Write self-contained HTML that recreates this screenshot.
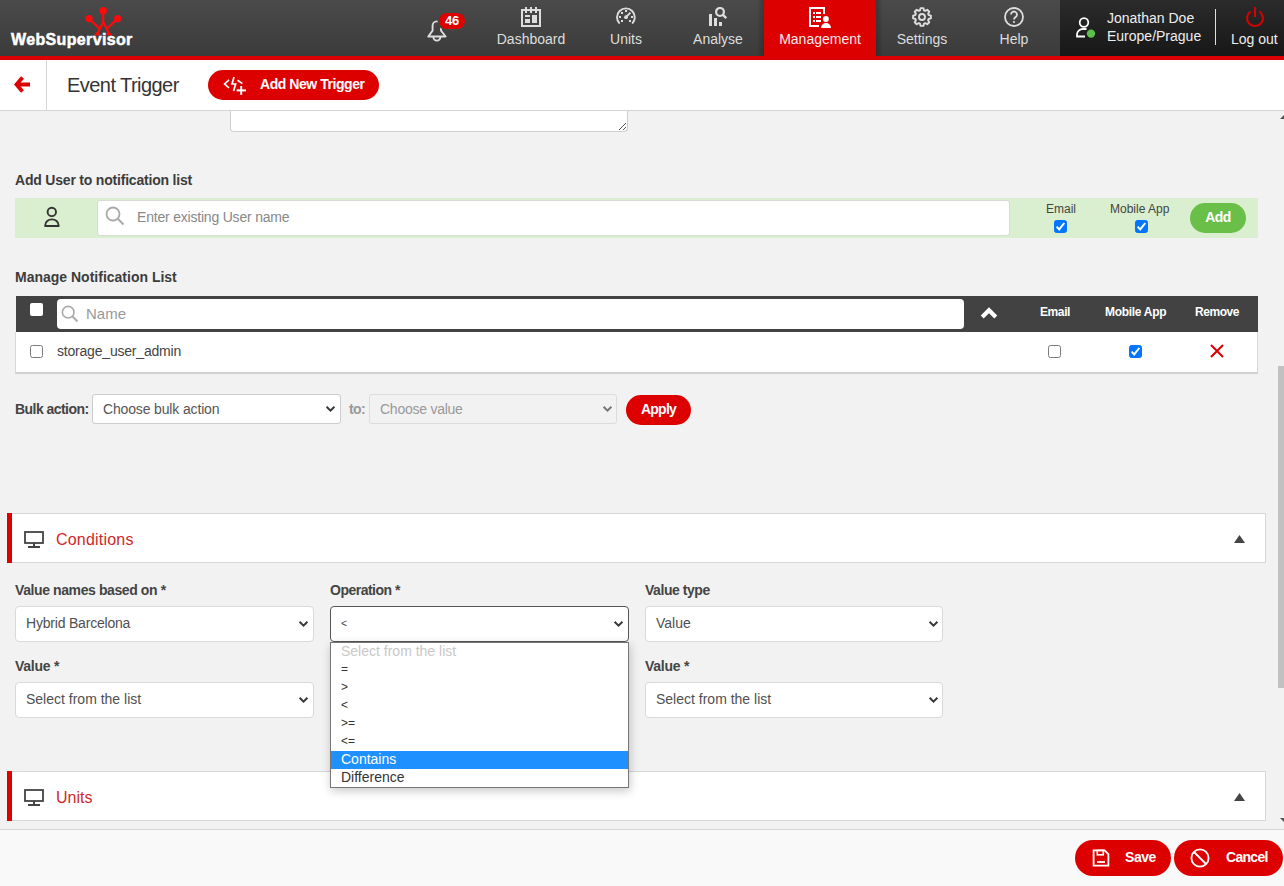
<!DOCTYPE html>
<html><head><meta charset="utf-8">
<style>
*{box-sizing:border-box;margin:0;padding:0}
html,body{width:1284px;height:886px;overflow:hidden}
body{background:#f2f2f2;font-family:"Liberation Sans",sans-serif;color:#444;position:relative}
.abs{position:absolute}
#hdr{left:0;top:0;width:1284px;height:56px;background:linear-gradient(#4a4a4a,#3b3b3b)}
#redline{left:0;top:56px;width:1284px;height:4px;background:#dd0000}
.nav{top:0;height:56px;color:#ddd;font-size:14px;text-align:center}
.nav .lbl{position:absolute;left:0;right:0;top:31px;line-height:16px;white-space:nowrap}
.nav svg{position:absolute;top:7px}
#user{left:1060px;top:0;width:224px;height:56px;background:linear-gradient(#2b2b2b,#171717)}
#sub{left:0;top:60px;width:1284px;height:50px;background:#fff}
.lbl14b{font-size:14px;font-weight:bold;color:#3c3c3c;white-space:nowrap;line-height:16px}
.txt{white-space:nowrap}
.sel{background:#fff;border:1px solid #d9d9d9;border-radius:4px}
.chev{position:absolute}
.panel{background:#fff;border:1px solid #d6d6d6}
.redbar{background:#dd0000}

.cbx{width:13px;height:13px;border:1px solid #7a7a7a;border-radius:2.5px;background:#fff}
.cbx.on{background:#0075ff;border-color:#0075ff}

.dd{font-size:14px;color:#333;line-height:18px}
.dd.sym{font-size:12px}
.btnr{background:#dd0000;border-radius:18px}
</style></head><body>
<!-- HEADER -->
<div id="hdr" class="abs"></div>
<div id="redline" class="abs"></div>

<!-- logo -->
<svg class="abs" style="left:80px;top:2px" width="50" height="36" viewBox="80 2 50 36">
 <g stroke="#ff0a0a" stroke-width="2.2" fill="none" stroke-linecap="butt">
  <line x1="103.2" y1="11" x2="103.2" y2="22.8"/>
  <line x1="89.1" y1="18.6" x2="100.2" y2="29.2"/>
  <line x1="117.6" y1="18.6" x2="106.3" y2="29.2"/>
  <line x1="103.2" y1="22" x2="96.8" y2="34.6"/>
  <line x1="103.2" y1="22" x2="109.6" y2="34.6"/>
 </g>
 <g fill="#ff0a0a">
  <circle cx="103.2" cy="10.7" r="3.7"/>
  <circle cx="89.1" cy="18.6" r="3.6"/>
  <circle cx="117.6" cy="18.6" r="3.6"/>
  <path d="M94 35.6 L97.2 31.5 L99.9 33.6 V35.6 Z"/>
  <path d="M112.4 35.6 L109.2 31.5 L106.5 33.6 V35.6 Z"/>
 </g>
</svg>
<div class="abs txt" style="left:11px;top:30.5px;font-size:16px;font-weight:bold;color:#fff;line-height:18px;letter-spacing:0.35px;-webkit-text-stroke:0.5px #fff">WebSupervisor</div>

<!-- bell -->
<svg class="abs" style="left:420px;top:8px" width="50" height="38" viewBox="420 8 50 38">
 <path d="M428.3 36.5 L432.6 30.6 V25.6 A4.2 4.2 0 0 1 441 25.6 V30.6 L445.6 36.5 Z" fill="none" stroke="#ddd" stroke-width="1.9" stroke-linejoin="round"/>
 <path d="M433.4 37 A3.5 3.6 0 0 0 440.4 37" fill="none" stroke="#ddd" stroke-width="1.9"/>
</svg>
<div class="abs" style="left:439px;top:13px;width:26px;height:16px;border-radius:8px;background:#dd0000;box-shadow:0 0 0 1.5px #464646;color:#fff;font-size:13px;font-weight:bold;text-align:center;line-height:16px;letter-spacing:-0.3px">46</div>

<!-- nav items -->
<div class="abs nav" style="left:482px;width:98px"><span class="lbl">Dashboard</span>
 <svg style="left:39px" width="20" height="20" viewBox="0 0 20 20"><g fill="none" stroke="#ddd" stroke-width="2"><rect x="1" y="3" width="18" height="16"/></g><g fill="#ddd"><rect x="4" y="0" width="2" height="6"/><rect x="9" y="0" width="2" height="6"/><rect x="14" y="0" width="2" height="6"/><rect x="4" y="8" width="5" height="2"/><rect x="4" y="12" width="5" height="4"/><rect x="11" y="8" width="5" height="8"/></g></svg>
</div>
<div class="abs nav" style="left:580px;width:92px"><span class="lbl">Units</span>
 <svg style="left:36px" width="20" height="20" viewBox="0 0 20 20"><path d="M3.6 16.6 A8.9 8.9 0 1 1 16.2 16.6" fill="none" stroke="#ddd" stroke-width="1.9"/><g fill="#ddd"><circle cx="10" cy="10.2" r="1.9"/><rect x="9" y="3" width="2" height="2"/><rect x="5" y="5" width="2" height="2"/><rect x="3" y="9" width="2" height="2"/><rect x="5" y="13" width="2" height="2"/><rect x="15" y="9" width="2" height="2"/><rect x="13" y="13" width="2" height="2"/></g><line x1="10" y1="10.2" x2="14.4" y2="5.6" stroke="#ddd" stroke-width="1.9"/></svg>
</div>
<div class="abs nav" style="left:672px;width:92px"><span class="lbl">Analyse</span>
 <svg style="left:36px" width="20" height="20" viewBox="0 0 20 20"><g fill="#ddd"><rect x="1" y="7" width="3" height="12"/><rect x="6" y="11" width="3" height="8"/><rect x="11" y="15" width="3" height="4"/></g><circle cx="12" cy="4.9" r="3.9" fill="none" stroke="#ddd" stroke-width="2.2"/><line x1="14.6" y1="7.6" x2="18.3" y2="11.2" stroke="#ddd" stroke-width="2.4"/></svg>
</div>
<div class="abs" style="left:757px;top:0;width:7px;height:56px;background:linear-gradient(to right,rgba(0,0,0,0),rgba(0,0,0,.22))"></div>
<div class="abs" style="left:876px;top:0;width:7px;height:56px;background:linear-gradient(to left,rgba(0,0,0,0),rgba(0,0,0,.22))"></div>
<div class="abs" style="left:764px;top:0;width:112px;height:56px;background:#dd0000"></div>
<div class="abs nav" style="left:764px;width:112px;color:#fbeaea"><span class="lbl">Management</span>
 <svg style="left:45px" width="23" height="22" viewBox="0 0 23 22"><path d="M15 7 V1 H1 V19 H10" fill="none" stroke="#fff" stroke-width="2"/><g fill="#fff"><rect x="4" y="5" width="2" height="2"/><rect x="7" y="5" width="5" height="2"/><rect x="4" y="9" width="2" height="2"/><rect x="7" y="9" width="5" height="2"/><rect x="4" y="13" width="2" height="2"/><rect x="7" y="13" width="5" height="2"/><circle cx="16.9" cy="11.9" r="3"/><path d="M12 21 A5 5 0 0 1 22 21 Z"/></g></svg>
</div>
<div class="abs nav" style="left:876px;width:92px"><span class="lbl">Settings</span>
 <svg style="left:36px" width="20" height="20" viewBox="0 0 20 20"><g fill="none" stroke="#ddd" stroke-width="1.9" stroke-linejoin="round"><path d="M7.98 3.40 L8.59 1.11 L11.41 1.11 L12.02 3.40 L13.24 3.91 L15.29 2.72 L17.28 4.71 L16.09 6.76 L16.60 7.98 L18.89 8.59 L18.89 11.41 L16.60 12.02 L16.09 13.24 L17.28 15.29 L15.29 17.28 L13.24 16.09 L12.02 16.60 L11.41 18.89 L8.59 18.89 L7.98 16.60 L6.76 16.09 L4.71 17.28 L2.72 15.29 L3.91 13.24 L3.40 12.02 L1.11 11.41 L1.11 8.59 L3.40 7.98 L3.91 6.76 L2.72 4.71 L4.71 2.72 L6.76 3.91 Z"/><circle cx="10" cy="10" r="3"/></g></svg>
</div>
<div class="abs nav" style="left:968px;width:92px"><span class="lbl">Help</span>
 <svg style="left:36px" width="20" height="20" viewBox="0 0 20 20"><circle cx="10" cy="10" r="9" fill="none" stroke="#ddd" stroke-width="1.8"/><path d="M7 7.5 a3 3 0 1 1 4.5 2.6 c-1 .6 -1.5 1 -1.5 2.4" fill="none" stroke="#ddd" stroke-width="1.8"/><circle cx="10" cy="15" r="1.1" fill="#ddd"/></svg>
</div>

<!-- user area -->
<div id="user" class="abs"></div>
<svg class="abs" style="left:1075px;top:16px" width="22" height="23" viewBox="0 0 22 23">
 <circle cx="9" cy="6.5" r="4.3" fill="none" stroke="#fff" stroke-width="1.8"/>
 <path d="M11.5 13 H8 a6 5.5 0 0 0 -6 5.5 V20.5 H10" fill="none" stroke="#fff" stroke-width="1.8"/>
 <circle cx="16" cy="17.6" r="4.2" fill="#5cc04a"/>
</svg>
<div class="abs txt" style="left:1107px;top:9px;font-size:14px;color:#eee;line-height:18px">Jonathan Doe<br>Europe/Prague</div>
<div class="abs" style="left:1215px;top:9px;width:1px;height:36px;background:#e0e0e0"></div>
<svg class="abs" style="left:1245px;top:6px" width="20" height="22" viewBox="0 0 20 22">
 <path d="M5.5 5.5 A8 8 0 1 0 14.5 5.5" fill="none" stroke="#dd0000" stroke-width="2"/>
 <line x1="10" y1="1" x2="10" y2="11" stroke="#dd0000" stroke-width="2.1"/>
</svg>
<div class="abs txt" style="left:1231px;top:31px;font-size:14px;color:#eee;line-height:16px">Log out</div>

<!-- SUBHEADER -->
<div id="sub" class="abs"></div>
<div class="abs" style="left:46px;top:60px;width:1px;height:50px;background:#d4d4d4"></div>
<svg class="abs" style="left:13px;top:75px" width="19" height="19" viewBox="0 0 19 19"><path d="M9.5 2.5 L3.5 9.5 L9.5 16.5" fill="none" stroke="#dd0000" stroke-width="3.8"/><rect x="4" y="7.5" width="13" height="4" fill="#dd0000"/></svg>
<div class="abs txt" style="left:67px;top:74px;font-size:20px;color:#333;line-height:23px;letter-spacing:-0.55px">Event Trigger</div>
<div class="abs" style="left:208px;top:70px;width:171px;height:30px;border-radius:15px;background:#dd0000"></div>
<svg class="abs" style="left:220px;top:72px" width="32" height="26" viewBox="220 72 32 26"><g fill="none" stroke="#fff" stroke-width="1.7"><polyline points="229,79.8 224.6,83.9 229,88"/><polyline points="234,77 232,84 235.6,84 233.6,91"/><line x1="237.6" y1="80.2" x2="242.4" y2="83.6"/></g><g stroke="#fff" stroke-width="2"><line x1="241.2" y1="86" x2="241.2" y2="94.8"/><line x1="236.6" y1="90.4" x2="246" y2="90.4"/></g></svg>
<div class="abs txt" style="left:260px;top:76px;font-size:14px;font-weight:bold;color:#fff;line-height:17px;letter-spacing:-0.45px">Add New Trigger</div>


<!-- textarea remnant -->
<div class="abs" style="left:230px;top:111px;width:398px;height:21px;background:#fff;border:1px solid #cfcfcf;border-top:none;border-radius:0 0 4px 4px"></div>
<svg class="abs" style="left:618px;top:121.8px" width="9" height="9" viewBox="0 0 9 9"><g stroke="#555" stroke-width="1"><line x1="1" y1="8" x2="8" y2="1"/><line x1="5" y1="8" x2="8" y2="5"/></g></svg>
<!-- re-draw subheader bottom line over textarea -->
<div class="abs" style="left:0;top:110px;width:1284px;height:1px;background:#d4d4d4"></div>

<!-- Add user -->
<div class="abs lbl14b" style="left:15px;top:172px;letter-spacing:-0.2px">Add User to notification list</div>
<div class="abs" style="left:15px;top:198px;width:1243px;height:40px;background:#d9efcf"></div>
<svg class="abs" style="left:43px;top:206px" width="18" height="22" viewBox="0 0 18 22"><circle cx="8.8" cy="5.9" r="4.2" fill="none" stroke="#333" stroke-width="1.9"/><path d="M2.3 20 V19 a6.6 5.6 0 0 1 13.2 0 V20 Z" fill="none" stroke="#333" stroke-width="1.9" stroke-linejoin="miter"/></svg>
<div class="abs" style="left:97px;top:200px;width:913px;height:36px;background:#fff;border:1px solid #d6dcd3;border-radius:3px"></div>
<svg class="abs" style="left:105px;top:206px" width="20" height="20" viewBox="0 0 20 20"><circle cx="8" cy="8" r="6.5" fill="none" stroke="#aaa" stroke-width="1.8"/><line x1="12.8" y1="12.8" x2="18.5" y2="18.5" stroke="#aaa" stroke-width="2"/></svg>
<div class="abs txt" style="left:137px;top:209px;font-size:14px;color:#888;line-height:16px;letter-spacing:-0.2px">Enter existing User name</div>
<div class="abs txt" style="left:1046px;top:202px;font-size:12px;color:#444;line-height:14px">Email</div>
<div class="abs txt" style="left:1110px;top:202px;font-size:12px;color:#444;line-height:14px">Mobile App</div>
<div class="abs cbx on" style="left:1054px;top:220px"><svg width="13" height="13" viewBox="0 0 13 13" style="position:absolute;left:-1px;top:-1px"><path d="M2.6 6.6 L5.2 9.4 L10.3 3" fill="none" stroke="#fff" stroke-width="2"/></svg></div>
<div class="abs cbx on" style="left:1135px;top:220px"><svg width="13" height="13" viewBox="0 0 13 13" style="position:absolute;left:-1px;top:-1px"><path d="M2.6 6.6 L5.2 9.4 L10.3 3" fill="none" stroke="#fff" stroke-width="2"/></svg></div>
<div class="abs" style="left:1190px;top:203px;width:56px;height:30px;border-radius:15px;background:#6abf48;color:#fff;font-size:14px;font-weight:bold;text-align:center;line-height:28px;letter-spacing:-0.5px">Add</div>

<!-- Manage notification list -->
<div class="abs lbl14b" style="left:15px;top:269px">Manage Notification List</div>
<div class="abs" style="left:16px;top:296px;width:1242px;height:36px;background:#424242"></div>
<div class="abs" style="left:30px;top:303px;width:13px;height:13px;background:#fff;border-radius:2px"></div>
<div class="abs" style="left:57px;top:299px;width:907px;height:30px;background:#fff;border-radius:4px"></div>
<svg class="abs" style="left:61px;top:305px" width="18" height="18" viewBox="0 0 18 18"><circle cx="7.2" cy="7.2" r="5.8" fill="none" stroke="#aaa" stroke-width="1.6"/><line x1="11.5" y1="11.5" x2="16.5" y2="16.5" stroke="#aaa" stroke-width="1.8"/></svg>
<div class="abs txt" style="left:86px;top:305px;font-size:15px;color:#999;line-height:17px">Name</div>
<svg class="abs" style="left:980px;top:307.2px" width="18" height="12" viewBox="0 0 18 12"><path d="M2.2 10 L9 3.3 L15.8 10" fill="none" stroke="#fff" stroke-width="4.2"/></svg>
<div class="abs txt" style="left:1040px;top:305px;font-size:12px;font-weight:bold;color:#fff;line-height:14px;letter-spacing:-0.4px">Email</div>
<div class="abs txt" style="left:1105px;top:305px;font-size:12px;font-weight:bold;color:#fff;line-height:14px;letter-spacing:-0.3px">Mobile App</div>
<div class="abs txt" style="left:1195px;top:305px;font-size:12px;font-weight:bold;color:#fff;line-height:14px;letter-spacing:-0.45px">Remove</div>
<div class="abs" style="left:15px;top:332px;width:1243px;height:42px;background:#fff;border:1px solid #d8d8d8;border-top:none;border-bottom:2px solid #d0d0d0"></div>
<div class="abs cbx" style="left:30px;top:345px"></div>
<div class="abs txt" style="left:57px;top:343px;font-size:14px;color:#444;line-height:16px;letter-spacing:-0.2px">storage_user_admin</div>
<div class="abs cbx" style="left:1048px;top:345px"></div>
<div class="abs cbx on" style="left:1129px;top:345px"><svg width="13" height="13" viewBox="0 0 13 13" style="position:absolute;left:-1px;top:-1px"><path d="M2.6 6.6 L5.2 9.4 L10.3 3" fill="none" stroke="#fff" stroke-width="2"/></svg></div>
<svg class="abs" style="left:1209px;top:343px" width="16" height="16" viewBox="0 0 16 16"><path d="M2 2 L14 14 M14 2 L2 14" stroke="#dd0000" stroke-width="2"/></svg>

<!-- Bulk action -->
<div class="abs lbl14b" style="left:15px;top:401px;color:#444;letter-spacing:-0.55px">Bulk action:</div>
<div class="abs sel" style="left:92px;top:394px;width:249px;height:30px;border-color:#ccc;border-radius:3px"></div>
<div class="abs txt" style="left:103px;top:401px;font-size:14px;color:#555;line-height:16px;letter-spacing:-0.15px">Choose bulk action</div>
<svg class="abs chev" style="left:325px;top:405px" width="11" height="8" viewBox="0 0 11 8"><path d="M1.6 1.8 L5.5 5.7 L9.4 1.8" fill="none" stroke="#383838" stroke-width="2"/></svg>
<div class="abs lbl14b" style="left:349px;top:401px;color:#999;letter-spacing:-0.6px">to:</div>
<div class="abs" style="left:369px;top:394px;width:248px;height:30px;background:#f2f2f2;border:1px solid #dcdcdc;border-radius:3px"></div>
<div class="abs txt" style="left:380px;top:401px;font-size:14px;color:#999;line-height:16px;letter-spacing:-0.25px">Choose value</div>
<svg class="abs chev" style="left:602px;top:405px" width="11" height="8" viewBox="0 0 11 8"><path d="M1.6 1.8 L5.5 5.7 L9.4 1.8" fill="none" stroke="#777" stroke-width="2"/></svg>
<div class="abs" style="left:626px;top:395px;width:65px;height:30px;border-radius:15px;background:#dd0000;color:#fff;font-size:14px;font-weight:bold;text-align:center;line-height:28px;letter-spacing:-0.75px">Apply</div>

<!-- Conditions panel -->
<div class="abs panel" style="left:7px;top:513px;width:1259px;height:50px"></div>
<div class="abs redbar" style="left:7px;top:513px;width:5px;height:50px"></div>
<svg class="abs" style="left:24px;top:531px" width="20" height="17" viewBox="0 0 20 17"><rect x="1" y="1" width="18" height="11" fill="none" stroke="#444" stroke-width="1.8"/><rect x="9" y="12" width="2" height="3" fill="#444"/><rect x="4" y="15" width="12" height="2" fill="#444"/></svg>
<div class="abs txt" style="left:56px;top:531px;font-size:16px;color:#d02929;line-height:18px;letter-spacing:0.2px">Conditions</div>
<svg class="abs" style="left:1234px;top:535px" width="11" height="8" viewBox="0 0 11 8"><path d="M0 8 L5.5 0 L11 8 Z" fill="#444"/></svg>

<div class="abs lbl14b" style="left:15px;top:582px;color:#444;letter-spacing:-0.4px">Value names based on *</div>
<div class="abs lbl14b" style="left:330px;top:582px;color:#444;letter-spacing:-0.5px">Operation *</div>
<div class="abs lbl14b" style="left:645px;top:582px;color:#444;letter-spacing:-0.45px">Value type</div>
<div class="abs sel" style="left:15px;top:606px;width:299px;height:36px"></div>
<div class="abs txt" style="left:26px;top:615px;font-size:14px;color:#505050;line-height:16px;letter-spacing:-0.2px">Hybrid Barcelona</div>
<svg class="abs chev" style="left:298px;top:620px" width="11" height="8" viewBox="0 0 11 8"><path d="M1.6 1.8 L5.5 5.7 L9.4 1.8" fill="none" stroke="#383838" stroke-width="2"/></svg>
<div class="abs sel" style="left:330px;top:606px;width:299px;height:36px;border-color:#555"></div>
<div class="abs txt" style="left:341px;top:617px;font-size:10.5px;color:#444;line-height:13px">&lt;</div>
<svg class="abs chev" style="left:613px;top:620px" width="11" height="8" viewBox="0 0 11 8"><path d="M1.6 1.8 L5.5 5.7 L9.4 1.8" fill="none" stroke="#383838" stroke-width="2"/></svg>
<div class="abs sel" style="left:645px;top:606px;width:298px;height:36px"></div>
<div class="abs txt" style="left:656px;top:615px;font-size:14px;color:#505050;line-height:16px">Value</div>
<svg class="abs chev" style="left:928px;top:620px" width="11" height="8" viewBox="0 0 11 8"><path d="M1.6 1.8 L5.5 5.7 L9.4 1.8" fill="none" stroke="#383838" stroke-width="2"/></svg>

<div class="abs lbl14b" style="left:15px;top:658px;color:#444;letter-spacing:-0.25px">Value *</div>
<div class="abs lbl14b" style="left:645px;top:658px;color:#444;letter-spacing:-0.25px">Value *</div>
<div class="abs sel" style="left:15px;top:682px;width:299px;height:36px"></div>
<div class="abs txt" style="left:26px;top:691px;font-size:14px;color:#505050;line-height:16px">Select from the list</div>
<svg class="abs chev" style="left:298px;top:696px" width="11" height="8" viewBox="0 0 11 8"><path d="M1.6 1.8 L5.5 5.7 L9.4 1.8" fill="none" stroke="#383838" stroke-width="2"/></svg>
<div class="abs sel" style="left:645px;top:682px;width:298px;height:36px"></div>
<div class="abs txt" style="left:656px;top:691px;font-size:14px;color:#505050;line-height:16px">Select from the list</div>
<svg class="abs chev" style="left:928px;top:696px" width="11" height="8" viewBox="0 0 11 8"><path d="M1.6 1.8 L5.5 5.7 L9.4 1.8" fill="none" stroke="#383838" stroke-width="2"/></svg>

<!-- Units panel -->
<div class="abs panel" style="left:7px;top:771px;width:1259px;height:50px"></div>
<div class="abs redbar" style="left:7px;top:771px;width:5px;height:50px"></div>
<svg class="abs" style="left:24px;top:789px" width="20" height="17" viewBox="0 0 20 17"><rect x="1" y="1" width="18" height="11" fill="none" stroke="#444" stroke-width="1.8"/><rect x="9" y="12" width="2" height="3" fill="#444"/><rect x="4" y="15" width="12" height="2" fill="#444"/></svg>
<div class="abs txt" style="left:56px;top:789px;font-size:16px;color:#d02929;line-height:18px">Units</div>
<svg class="abs" style="left:1234px;top:793px" width="11" height="8" viewBox="0 0 11 8"><path d="M0 8 L5.5 0 L11 8 Z" fill="#444"/></svg>

<!-- dropdown -->
<div class="abs" style="left:330px;top:642px;width:299px;height:146px;background:#fff;border:1px solid #767676;box-shadow:1px 3px 9px rgba(0,0,0,.22)"></div>
<div class="abs txt dd" style="left:341px;top:642px;color:#c8c8c8">Select from the list</div>
<div class="abs txt dd sym" style="left:341px;top:660px">=</div>
<div class="abs txt dd sym" style="left:341px;top:678px">&gt;</div>
<div class="abs txt dd sym" style="left:341px;top:696px">&lt;</div>
<div class="abs txt dd sym" style="left:341px;top:714px">&gt;=</div>
<div class="abs txt dd sym" style="left:341px;top:732px">&lt;=</div>
<div class="abs" style="left:331px;top:751px;width:297px;height:18px;background:#1e90ff"></div>
<div class="abs txt dd" style="left:341px;top:750px;color:#fff">Contains</div>
<div class="abs txt dd" style="left:341px;top:768px">Difference</div>

<!-- footer -->
<div class="abs" style="left:0;top:829px;width:1284px;height:57px;background:#f9f9f9;border-top:1px solid #d8d8d8"></div>
<div class="abs btnr" style="left:1075px;top:840px;width:96px;height:36px"></div>
<svg class="abs" style="left:1092px;top:849px" width="18" height="18" viewBox="0 0 18 18"><path d="M1.6 1.4 H12.6 L16.4 5.2 V16.6 H1.6 Z" fill="none" stroke="#fff" stroke-width="1.8"/><rect x="5.3" y="1.4" width="6" height="4.4" fill="none" stroke="#fff" stroke-width="1.6"/><line x1="5" y1="13" x2="13" y2="13" stroke="#fff" stroke-width="1.8"/></svg>
<div class="abs txt" style="left:1125px;top:849px;font-size:14px;font-weight:bold;color:#fff;line-height:17px;letter-spacing:-0.45px">Save</div>
<div class="abs btnr" style="left:1174px;top:840px;width:109px;height:36px"></div>
<svg class="abs" style="left:1190px;top:848px" width="20" height="20" viewBox="0 0 20 20"><circle cx="10" cy="10" r="8.6" fill="none" stroke="#fff" stroke-width="1.8"/><line x1="4" y1="4" x2="16" y2="16" stroke="#fff" stroke-width="1.8"/></svg>
<div class="abs txt" style="left:1226px;top:849px;font-size:14px;font-weight:bold;color:#fff;line-height:17px;letter-spacing:-0.7px">Cancel</div>

<!-- scrollbar -->
<div class="abs" style="left:1269px;top:111px;width:15px;height:718px;background:#f2f2f2"></div>
<div class="abs" style="left:1278px;top:366px;width:6px;height:322px;background:#c1c1c1"></div>
<svg class="abs" style="left:1278px;top:113px" width="6" height="8" viewBox="0 0 6 8"><path d="M6 2 L2 6 H6 Z" fill="#505050"/></svg>
<svg class="abs" style="left:1278px;top:816px" width="6" height="8" viewBox="0 0 6 8"><path d="M6 6 L2 2 H6 Z" fill="#505050"/></svg>
</body></html>
